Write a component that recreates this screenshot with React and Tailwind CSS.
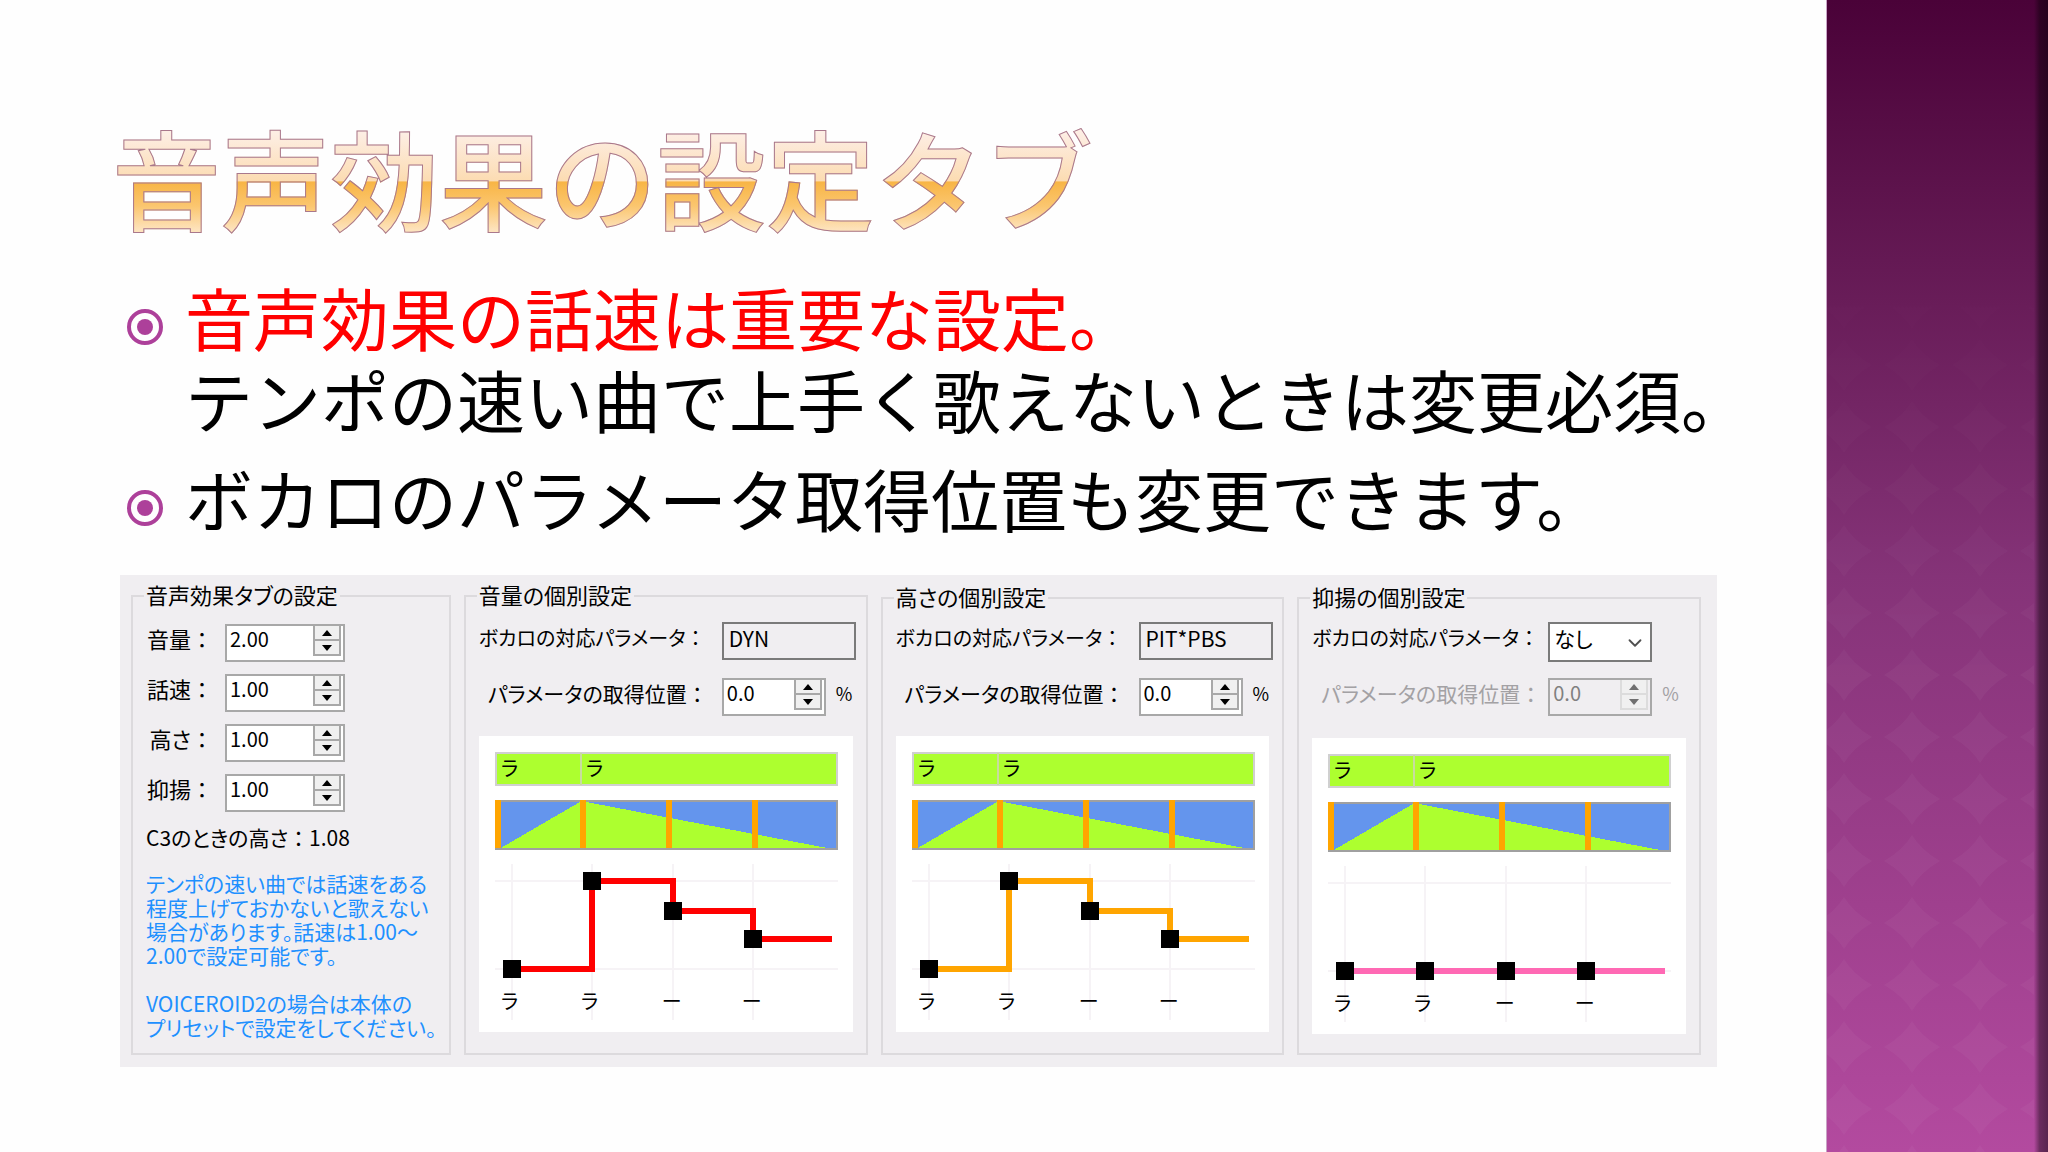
import { useState } from 'react'
import { ChevronDown } from 'lucide-react'

const BASICS = [
  { id: 'volume', label: '音量', value: '2.00' },
  { id: 'speed', label: '話速', value: '1.00' },
  { id: 'pitch', label: '高さ', value: '1.00' },
  { id: 'accent', label: '抑揚', value: '1.00' },
]

const STEPS = [
  { x: 33, y: 233 },
  { x: 113, y: 145 },
  { x: 194, y: 175 },
  { x: 274, y: 203 },
]

const FLAT = STEPS.map(p => ({ x: p.x, y: 233 }))

const SYLLABLES = ['ラ', 'ラ', 'ー', 'ー']

function stepPath(points) {
  let d = `M${points[0].x} ${points[0].y}`
  points.slice(1).forEach(p => {
    d += ` H${p.x} V${p.y}`
  })
  return d + ' H353'
}

// the label colon keeps its full width, the kana around it are proportional
function Colon() {
  return <span className="[font-feature-settings:normal]">：</span>
}

function Chart({ points, color }) {
  return (
    <svg viewBox="0 0 374 296" className="block w-full bg-white" role="img" aria-label="パラメータのグラフ">
      <g shapeRendering="crispEdges">
        <rect x="17" y="17" width="341" height="32" fill="#adff2f" stroke="#d0d0d0" strokeWidth="2" />
        <path d="M102 17 V49" stroke="#c8dca0" strokeWidth="2" />

        <rect x="17" y="65" width="341" height="48" fill="#6495ed" stroke="#a0a0a0" strokeWidth="2" />
        <path d="M22 112 L101 66 H107 L348 112 Z" fill="#adff2f" />
        <path d="M19 64 V112 M104 64 V112 M190 64 V112 M276 64 V112" stroke="#ffa500" strokeWidth="6" />

        <path d="M33 128 V284 M113 128 V284 M194 128 V284 M274 128 V284 M16 145 H359 M16 233 H359" stroke="#f6f3f6" strokeWidth="2" />
        <path d={stepPath(points)} fill="none" stroke={color} strokeWidth="6" />
        {points.map(p => (
          <rect key={p.x} x={p.x - 9} y={p.y - 9} width="18" height="18" fill="#000" />
        ))}
      </g>
      <g fontSize="20" fill="#000">
        <text x="22" y="40">ラ</text>
        <text x="107" y="40">ラ</text>
        {SYLLABLES.map((s, i) => (
          <text key={i} x={points[i].x - 11} y="273">{s}</text>
        ))}
      </g>
    </svg>
  )
}

function SpinButton({ label, up, disabled, onClick }) {
  return (
    <button
      type="button"
      aria-label={label}
      disabled={disabled}
      onClick={onClick}
      className={`flex h-[15px] w-[28px] items-center justify-center border-2 border-t-0 bg-[#f0f0f0] ${disabled ? 'border-[#dcdcdc] text-[#707070]' : 'border-[#a8a8a8] text-black'}`}
    >
      <svg viewBox="0 0 10 6" className="h-[6px] w-[10px]" fill="currentColor">
        <path d={up ? 'M0 6 L5 0 L10 6 Z' : 'M0 0 L5 6 L10 0 Z'} />
      </svg>
    </button>
  )
}

function Spinner({ id, initial, digits, disabled, className }) {
  const [value, setValue] = useState(initial)

  const step = delta => {
    setValue(v => (Number(v) + delta).toFixed(digits))
  }

  return (
    <div className={`flex h-[38px] shrink-0 border-2 border-[#a8a8a8] pr-[2px] ${disabled ? 'bg-[#f0eef1]' : 'bg-white'} ${className}`}>
      <input
        id={id}
        type="text"
        inputMode="decimal"
        value={value}
        disabled={disabled}
        onChange={e => setValue(e.target.value)}
        className="h-[26px] min-w-0 flex-1 bg-transparent pl-[3px] text-[20px] outline-none disabled:text-[#808080]"
      />
      <div className="flex flex-col">
        <SpinButton label="増やす" up disabled={disabled} onClick={() => step(0.1)} />
        <SpinButton label="減らす" disabled={disabled} onClick={() => step(-0.1)} />
      </div>
    </div>
  )
}

function Group({ title, className, children }) {
  return (
    <fieldset className={`min-w-0 border-2 border-[#dcdadd] px-[13px] ${className}`}>
      <legend className="-ml-[2px] px-[2px] pb-1 text-[22px] leading-[20px]">{title}</legend>
      {children}
    </fieldset>
  )
}

function ParamGroup({ id, title, param, points, color, disabled, shift }) {
  return (
    <Group title={title} className={shift ? 'mt-[2px]' : ''}>
      <div className={`flex items-start ${shift ? 'mt-3' : 'mt-[14px]'}`}>
        <label htmlFor={`${id}-param`} className={`shrink-0 pt-[2px] text-[20px] whitespace-nowrap ${disabled ? 'w-[236px]' : 'w-[243px]'}`}>
          ボカロの対応パラメータ<Colon />
        </label>
        {disabled ? (
          <div className="relative w-[104px] shrink-0">
            <select id={`${id}-param`} defaultValue={param} className="block h-[40px] w-full appearance-none border-2 border-[#7a7a7a] bg-white pb-[8px] pl-[4px] leading-[26px] outline-none">
              <option value={param}>{param}</option>
            </select>
            <ChevronDown className="pointer-events-none absolute top-[10px] right-[6px] size-[22px] text-[#505050]" strokeWidth={2} />
          </div>
        ) : (
          <input
            id={`${id}-param`}
            type="text"
            readOnly
            value={param}
            className="h-[38px] w-[134px] shrink-0 border-2 border-[#7a7a7a] bg-transparent pb-[7px] pl-[5px] outline-none"
          />
        )}
      </div>

      <div className={`flex items-start ${disabled ? 'mt-4 text-[#a3a1a4]' : 'mt-[18px]'}`}>
        <label htmlFor={`${id}-pos`} className={`shrink-0 pt-[1px] pl-[9px] whitespace-nowrap ${disabled ? 'w-[236px]' : 'w-[243px]'}`}>
          パラメータの取得位置<Colon />
        </label>
        <Spinner id={`${id}-pos`} initial="0.0" digits={1} disabled={disabled} className="w-[104px]" />
        <span className="ml-[10px] pt-[1px] text-[18px]">%</span>
      </div>

      <div className={`mb-[19px] ${disabled ? 'mt-[22px]' : 'mt-5'}`}>
        <Chart points={points} color={color} />
      </div>
    </Group>
  )
}

function Bullet() {
  return (
    <svg viewBox="0 0 36 36" className="mt-[33px] size-[36px] shrink-0" aria-hidden="true">
      <circle cx="18" cy="18" r="16" fill="none" stroke="#ad409a" strokeWidth="4" />
      <circle cx="18" cy="18" r="8" fill="#ad409a" />
    </svg>
  )
}

function Sidebar() {
  return (
    <aside className="flex w-[222px] shrink-0 border-l border-[#c9a3c6] bg-linear-to-b from-[#4a0238] via-[#853378] to-[#b34a9f]">
      <svg className="h-full flex-1" aria-hidden="true">
        <defs>
          <pattern id="diamonds" x="-17" y="24" width="68" height="62" patternUnits="userSpaceOnUse">
            <path d="M34 5 Q43 20 62 31 Q43 42 34 57 Q25 42 6 31 Q25 20 34 5 Z" fill="#fff" />
          </pattern>
          <linearGradient id="fade" x1="0" y1="0" x2="0" y2="1">
            <stop offset="0.2" stopColor="#000" />
            <stop offset="0.6" stopColor="#fff" />
          </linearGradient>
          <mask id="fade-mask">
            <rect width="100%" height="100%" fill="url(#fade)" />
          </mask>
        </defs>
        <g mask="url(#fade-mask)">
          <rect width="100%" height="100%" fill="url(#diamonds)" opacity="0.035" />
        </g>
      </svg>
      <div className="w-[14px] bg-linear-to-r from-transparent via-black/40 via-40% to-black/50" />
    </aside>
  )
}

function App() {
  return (
    <div className="flex min-h-screen bg-[#fefefe] font-['Noto_Sans_CJK_JP',sans-serif] text-black">
      <main className="min-w-0 flex-1 pt-[116px] pr-[109px] pb-[84px] pl-[112px]">
        <h1 className="w-fit bg-[linear-gradient(to_bottom,#fdeee4_14%,#fcdcb2_54%,#f8b545_55%,#fbc66f_75%,#fde3bd_95%)] bg-clip-text text-[109px] leading-[120px] font-medium whitespace-nowrap text-transparent [-webkit-text-stroke:1px_#a9788c]">
          音声効果の設定タブ
        </h1>

        <ul className="mt-10 flex flex-col gap-[17px] text-[68px] leading-[82px] whitespace-nowrap">
          <li className="flex gap-[22px] pl-[15px]">
            <Bullet />
            <p>
              <span className="text-[#ff0000]">音声効果の話速は重要な設定。</span>
              <br />
              テンポの速い曲で上手く歌えないときは変更必須。
            </p>
          </li>
          <li className="flex gap-[22px] pl-[15px]">
            <Bullet />
            <p>ボカロのパラメータ取得位置も変更できます。</p>
          </li>
        </ul>

        <section className="mt-9 ml-2 grid grid-cols-[320fr_404fr_404fr_404fr] gap-[13px] bg-[#f0eef1] pt-[9px] pr-4 pb-3 pl-[11px] text-[21px] leading-[28px] [font-feature-settings:'palt']">
          <Group title="音声効果タブの設定" className="">
            <div className="mt-4 flex flex-col gap-3">
              {BASICS.map(b => (
                <div key={b.id} className="flex items-start">
                  <label htmlFor={b.id} className="w-[67px] text-right text-[22px] whitespace-nowrap">{b.label}<Colon /></label>
                  <Spinner id={b.id} initial={b.value} digits={2} className="ml-3 w-[120px]" />
                </div>
              ))}
            </div>
            <p className="mt-[11px]">C3のときの高さ<Colon />1.08</p>
            <div className="mt-5 leading-[24px] whitespace-nowrap text-[#1e90ff]">
              <p>
                テンポの速い曲では話速をある<br />
                程度上げておかないと歌えない<br />
                場合があります。話速は1.00～<br />
                2.00で設定可能です。
              </p>
              <p className="mt-6">
                VOICEROID2の場合は本体の<br />
                プリセットで設定をしてください。
              </p>
            </div>
          </Group>

          <ParamGroup id="volume-curve" title="音量の個別設定" param="DYN" points={STEPS} color="#ff0000" />
          <ParamGroup id="pitch-curve" title="高さの個別設定" param="PIT*PBS" points={STEPS} color="#ffa500" shift />
          <ParamGroup id="accent-curve" title="抑揚の個別設定" param="なし" points={FLAT} color="#ff69b4" shift disabled />
        </section>
      </main>

      <Sidebar />
    </div>
  )
}

export default App
